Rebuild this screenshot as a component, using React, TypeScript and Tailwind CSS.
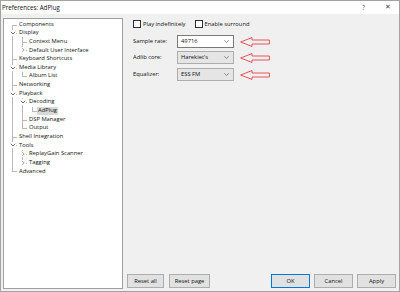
import React from 'react';

type Node = { label: string; open?: boolean; children?: Node[]; selected?: boolean };

const TREE: Node[] = [
  { label: 'Components' },
  {
    label: 'Display',
    open: true,
    children: [{ label: 'Context Menu' }, { label: 'Default User Interface', children: [] }],
  },
  { label: 'Keyboard Shortcuts' },
  { label: 'Media Library', open: true, children: [{ label: 'Album List' }] },
  { label: 'Networking' },
  {
    label: 'Playback',
    open: true,
    children: [
      { label: 'Decoding', open: true, children: [{ label: 'AdPlug', selected: true }] },
      { label: 'DSP Manager' },
      { label: 'Output' },
    ],
  },
  { label: 'Shell Integration' },
  {
    label: 'Tools',
    open: true,
    children: [
      { label: 'ReplayGain Scanner', children: [] },
      { label: 'Tagging', children: [] },
    ],
  },
  { label: 'Advanced' },
];

type Row = { node: Node; depth: number; last: boolean; first: boolean; rails: boolean[] };

// flatten the tree, remembering which ancestor levels still continue below
function flatten(nodes: Node[], depth: number, rails: boolean[], out: Row[]) {
  nodes.forEach((node, i) => {
    const last = i === nodes.length - 1;
    out.push({ node, depth, last, first: depth === 0 && i === 0, rails });
    if (node.open && node.children) flatten(node.children, depth + 1, [...rails, !last], out);
  });
  return out;
}

const ROWS = flatten(TREE, 0, [], []);
const lineX = (d: number) => 8 + d * 10;

function Chevron({ open }: { open: boolean }) {
  return (
    <svg width="6" height="6" viewBox="0 0 6 6" className="absolute top-[1.3px] left-0 bg-white">
      {open ? (
        <path d="M0.8 1.8 L3 4 L5.2 1.8" fill="none" stroke="#4a4a4a" strokeWidth="0.8" />
      ) : (
        <path d="M2 0.8 L4.2 3 L2 5.2" fill="none" stroke="#8a8a8a" strokeWidth="0.8" />
      )}
    </svg>
  );
}

function TreeRow({ row }: { row: Row }) {
  const { node, depth, last, first, rails } = row;
  const x = lineX(depth);
  const hasKids = !!node.children;
  return (
    <div className="relative h-[8.65px] flex items-center" style={{ paddingLeft: x + 6 }}>
      {rails.map((on, a) =>
        on ? (
          <span key={a} className="absolute top-0 bottom-0 w-px bg-[#b9b9b9]" style={{ left: lineX(a) }} />
        ) : null
      )}
      <span
        className="absolute w-px bg-[#b9b9b9]"
        style={{ left: x, top: first ? '50%' : 0, bottom: last ? '50%' : 0 }}
      />
      <span className="absolute top-1/2 h-px bg-[#b9b9b9]" style={{ left: x, width: 5 }} />
      {hasKids && (
        <span className="absolute top-0" style={{ left: x - 2 }}>
          <Chevron open={!!node.open} />
        </span>
      )}
      <span
        className={`relative leading-none whitespace-nowrap px-[1px] py-[1px] ${
          node.selected ? 'bg-[#d9d9d9] -ml-[1px]' : ''
        }`}
      >
        {node.label}
      </span>
    </div>
  );
}

function Select({ value, editable }: { value: string; editable?: boolean }) {
  return (
    <div
      className={`w-[57px] h-[13px] flex items-center justify-between pl-[3px] pr-[4px] border ${
        editable ? 'bg-white border-[#7a7a7a]' : 'bg-[#e5e5e5] border-[#adadad]'
      }`}
    >
      <span>{value}</span>
      <svg width="5" height="3" viewBox="0 0 5 3">
        <path d="M0.3 0.3 L2.5 2.5 L4.7 0.3" fill="none" stroke="#606060" strokeWidth="0.7" />
      </svg>
    </div>
  );
}

function RedArrow() {
  return (
    <svg width="30" height="10" viewBox="0 0 30 10" className="ml-[6px]">
      <path
        d="M0.6 5 L12 0.6 L12 3 L29.4 3 L29.4 7 L12 7 L12 9.4 Z"
        fill="none"
        stroke="#e5434b"
        strokeWidth="0.9"
      />
    </svg>
  );
}

function Field({ label, value, editable, className }: { label: string; value: string; editable?: boolean; className: string }) {
  return (
    <div className={`flex items-center ${className}`}>
      <span className="w-[44px]">{label}</span>
      <Select value={value} editable={editable} />
      <RedArrow />
    </div>
  );
}

function Check({ label }: { label: string }) {
  return (
    <label className="flex items-center gap-[2px]">
      <span className="w-[8px] h-[8px] border border-[#333] bg-white" />
      <span>{label}</span>
    </label>
  );
}

function Button({ label, w, primary }: { label: string; w: string; primary?: boolean }) {
  return (
    <button
      className={`${w} h-[14px] bg-[#e1e1e1] border flex items-center justify-center ${
        primary ? 'border-[#0078d7]' : 'border-[#adadad]'
      }`}
    >
      {label}
    </button>
  );
}

export default function App() {
  return (
    <div className="w-[400px] h-[292px] bg-[#f0f0f0] border border-[#a3a3a3] flex flex-col text-[5.8px] text-[#111] font-['Segoe_UI','Open_Sans',sans-serif] overflow-hidden">
      {/* title bar */}
      <div className="h-[13px] bg-white flex items-center pl-[1px] pr-[8px] text-[6.2px]">
        <span>Preferences: AdPlug</span>
        <span className="ml-auto text-[#444]">?</span>
        <span className="ml-[20px] text-[7px] text-[#444]">✕</span>
      </div>

      <div className="flex-1 flex pl-[2px] pr-[3px] pt-[4px] pb-[2px]">
        {/* tree */}
        <div className="w-[120px] bg-white border border-[#a0a0a0] pt-[1.2px]">
          {ROWS.map((r, i) => (
            <TreeRow key={i} row={r} />
          ))}
        </div>

        {/* page */}
        <div className="flex-1 ml-[4px] flex flex-col">
          <div className="flex-1 pl-[6px]">
            <div className="flex items-center mt-[2px] h-[8px]">
              <Check label="Play indefinitely" />
              <div className="ml-[9px]">
                <Check label="Enable surround" />
              </div>
            </div>
            <Field label="Sample rate:" value="49716" editable className="mt-[7px]" />
            <Field label="Adlib core:" value="Harekiet's" className="mt-[3px]" />
            <Field label="Equalizer:" value="ESS FM" className="mt-[4px]" />
          </div>

          <div className="flex items-center mb-[1px]">
            <Button label="Reset all" w="w-[37px]" />
            <div className="ml-[5px]">
              <Button label="Reset page" w="w-[41px]" />
            </div>
            <div className="ml-auto flex gap-[4px]">
              <Button label="OK" w="w-[39px]" primary />
              <Button label="Cancel" w="w-[39px]" />
              <Button label="Apply" w="w-[39px]" />
            </div>
          </div>
        </div>
      </div>
    </div>
  );
}
